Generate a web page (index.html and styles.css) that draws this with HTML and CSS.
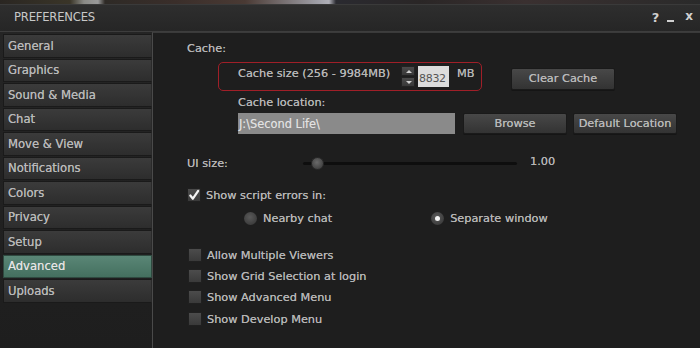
FILE: index.html
```html
<!DOCTYPE html>
<html>
<head>
<meta charset="utf-8">
<link rel="stylesheet" href="styles.css">
</head>
<body>
<div class="scene"></div>
<div class="window">
  <div class="titlebar">
    <span class="title">PREFERENCES</span>
    <div class="controls">
      <span class="help">?</span>
      <span class="minimize"></span>
      <span class="close">x</span>
    </div>
  </div>
  <div class="main">
    <div class="sidebar">
      <div class="tab">General</div>
      <div class="tab">Graphics</div>
      <div class="tab">Sound &amp; Media</div>
      <div class="tab">Chat</div>
      <div class="tab">Move &amp; View</div>
      <div class="tab">Notifications</div>
      <div class="tab">Colors</div>
      <div class="tab">Privacy</div>
      <div class="tab">Setup</div>
      <div class="tab active">Advanced</div>
      <div class="tab">Uploads</div>
    </div>
    <div class="panel">
      <div class="row label-row r-cache">Cache:</div>
      <div class="row r-cachesize">
        <div class="cachebox">
          <span class="cs-label">Cache size (256 - 9984MB)</span>
          <div class="spinner">
            <span class="spin up"></span>
            <span class="spin down"></span>
          </div>
          <span class="numinput">8832</span>
          <span class="unit">MB</span>
        </div>
        <button class="btn btn-clear">Clear Cache</button>
      </div>
      <div class="row label-row r-loclabel">Cache location:</div>
      <div class="row r-loc">
        <span class="pathinput">J:\Second Life\</span>
        <button class="btn btn-browse">Browse</button>
        <button class="btn btn-default">Default Location</button>
      </div>
      <div class="row r-ui">
        <span class="ui-label">UI size:</span>
        <div class="slider"><span class="thumb"></span></div>
        <span class="slider-val">1.00</span>
      </div>
      <div class="row r-script">
        <span class="check checked"><svg width="13" height="13" viewBox="0 0 13 13"><path d="M2.5 6.5 L5.3 10 L11 1.5" fill="none" stroke="#f4f4f4" stroke-width="2.4" stroke-linecap="round" stroke-linejoin="round"/></svg></span>
        <span class="ctext">Show script errors in:</span>
      </div>
      <div class="row r-radio">
        <span class="radio"></span><span class="rtext">Nearby chat</span>
        <span class="radio selected r2"></span><span class="rtext">Separate window</span>
      </div>
      <div class="row r-c1"><span class="check"></span><span class="ctext">Allow Multiple Viewers</span></div>
      <div class="row r-c2"><span class="check"></span><span class="ctext">Show Grid Selection at login</span></div>
      <div class="row r-c3"><span class="check"></span><span class="ctext">Show Advanced Menu</span></div>
      <div class="row r-c4"><span class="check"></span><span class="ctext">Show Develop Menu</span></div>
    </div>
  </div>
</div>
</body>
</html>
```

FILE: styles.css
```css
* { box-sizing: border-box; }
html, body {
  margin: 0;
  padding: 0;
  width: 700px;
  height: 348px;
  overflow: hidden;
  background: #1b1b1b;
  font-family: "DejaVu Sans", "Liberation Sans", sans-serif;
}
.scene {
  height: 4px;
  background: linear-gradient(90deg, #2a2622 0%, #3a3528 10%, #8a8a86 12%, #9a9a9a 14%, #2e2a26 15%, #3a2e2a 25%, #4a3a34 35%, #a0a0a8 45.5%, #b0b0b8 47%, #2a2a30 48%, #2a2626 60%, #3a3030 75%, #2a2a2a 100%);
}
.window {
  height: 344px;
  display: flex;
  flex-direction: column;
  background: #1c1c1c;
}
.titlebar {
  height: 28px;
  flex: none;
  display: flex;
  align-items: center;
  justify-content: space-between;
  padding: 0 7px 0 14px;
  background: linear-gradient(180deg, #2e2e2e, #262626);
  border-top: 1px solid #3a3a3a;
  border-bottom: 1px solid #3d3d3d;
}
.title {
  color: #c8c8c8;
  font-size: 11.6px;
  letter-spacing: -0.2px;
  margin-top: -3px;
}
.controls {
  display: flex;
  align-items: center;
  gap: 8px;
  color: #d0d0d0;
  margin-top: -2px;
}
.help { font-weight: bold; font-size: 13px; }
.minimize {
  width: 7px;
  height: 2px;
  background: #d0d0d0;
  margin-top: 7px;
}
.close { font-size: 12px; font-weight: bold; margin-top: -2px; margin-left: 3px; }
.main {
  flex: 1;
  display: flex;
}
.sidebar {
  width: 152px;
  flex: none;
  padding: 2px 0 0 3px;
  display: flex;
  flex-direction: column;
  gap: 1px;
  background: linear-gradient(180deg, #252525, #1e1e1e);
}
.tab {
  height: 23.5px;
  display: flex;
  align-items: center;
  padding-left: 4px;
  font-size: 11.6px;
  color: #b8b8b8;
  background: linear-gradient(180deg, #3b3b3b, #2d2d2d);
  border: 1px solid #1a1a1a;
  border-right-color: #2a2a2a;
  text-shadow: 0 0 0.5px #b8b8b8;
}
.tab.active {
  background: linear-gradient(180deg, #5a8676, #44705f);
  color: #e6e6e6;
  border-color: #2f4a40;
}
.panel {
  flex: 1;
  background: #1e1e1e;
  border-left: 1px solid #4a4a4a;
  border-top: 1px solid #3a3a3a;
  padding-left: 34px;
  font-size: 11.3px;
  color: #b5b5b5;
  text-shadow: 0 0 0.5px #b5b5b5;
}
.row {
  display: flex;
  align-items: center;
}
.label-row { height: 16px; }
.r-cache { margin-top: 7px; }
.r-cachesize { margin-top: 6px; height: 29px; }
.cachebox {
  margin-left: 31px;
  width: 264px;
  height: 29px;
  border: 1.5px solid #a01f28;
  border-radius: 5px;
  display: flex;
  align-items: center;
  padding-left: 19px;
}
.cs-label { width: 163px; margin-top: -6px; }
.spinner {
  display: flex;
  flex-direction: column;
  gap: 1px;
  width: 14px;
}
.spin {
  height: 10px;
  background: linear-gradient(180deg, #4a4a4a, #383838);
  border: 1px solid #222;
  position: relative;
}
.spin::after {
  content: "";
  position: absolute;
  left: 4px;
  top: 3px;
  border-left: 3px solid transparent;
  border-right: 3px solid transparent;
}
.spin.up::after { border-bottom: 3px solid #cfcfcf; }
.spin.down::after { border-top: 3px solid #cfcfcf; }
.numinput {
  margin-left: 3px;
  width: 31px;
  height: 21px;
  background: #dcdcdc;
  color: #555;
  display: flex;
  align-items: center;
  padding-left: 1px;
  font-size: 11px;
  letter-spacing: -0.3px;
  padding-top: 3px;
  text-shadow: none;
}
.unit { margin-left: 8px; margin-top: -6px; }
.btn {
  font-family: inherit;
  font-size: 11.3px;
  color: #b8b8b8;
  width: 104px;
  background: linear-gradient(180deg, #484848, #333333);
  border: 1px solid #1a1a1a;
  border-radius: 2px;
  padding: 0;
  box-shadow: 0 1px 0 #151515;
  text-shadow: 0 0 0.5px #b8b8b8;
}
.btn-clear { height: 22px; margin-left: 29px; margin-top: 4px; }
.r-loclabel { margin-top: 3px; padding-left: 51px; }
.r-loc { margin-top: 3px; height: 21px; }
.pathinput {
  margin-left: 51px;
  width: 217px;
  height: 21px;
  background: #8a8a8a;
  color: #e2e2e2;
  display: flex;
  align-items: center;
  padding-left: 1px;
  font-size: 11.4px;
}
.btn-browse { height: 21px; margin-left: 8px; }
.btn-default { height: 21px; margin-left: 6px; }
.r-ui { margin-top: 21px; height: 16px; }
.ui-label { width: 116px; }
.slider {
  width: 214px;
  height: 3px;
  background: #0e0e0e;
  border-radius: 2px;
  position: relative;
}
.thumb {
  position: absolute;
  left: 8px;
  top: -5px;
  width: 13px;
  height: 13px;
  border-radius: 50%;
  background: radial-gradient(circle at 45% 40%, #6a6a6a, #444 70%);
  border: 1px solid #2a2a2a;
}
.slider-val { margin-left: 13px; margin-top: -4px; }
.r-script { margin-top: 16px; height: 16px; }
.check {
  width: 14px;
  height: 14px;
  flex: none;
  background: linear-gradient(180deg, #4c4c4c, #3a3a3a);
  border: 1px solid #202020;
  display: flex;
  align-items: center;
  justify-content: center;
}
.check svg { display: block; }
.ctext { margin-left: 5px; }
.r-radio { margin-top: 7px; height: 16px; padding-left: 57px; }
.radio {
  width: 13px;
  height: 13px;
  border-radius: 50%;
  background: radial-gradient(circle at 45% 40%, #5a5a5a, #3c3c3c 75%);
  flex: none;
  position: relative;
}
.radio.selected::after {
  content: "";
  position: absolute;
  left: 4px;
  top: 4px;
  width: 5px;
  height: 5px;
  border-radius: 50%;
  background: #f2f2f2;
}
.rtext { margin-left: 6px; }
.r2 { margin-left: 99px; }
.r-c1 { margin-top: 21px; height: 16px; }
.r-c2 { margin-top: 5px; height: 16px; }
.r-c3 { margin-top: 5px; height: 16px; }
.r-c4 { margin-top: 6px; height: 16px; }
.r-c1 .check, .r-c2 .check, .r-c3 .check, .r-c4 .check { margin-left: 1px; }
```
